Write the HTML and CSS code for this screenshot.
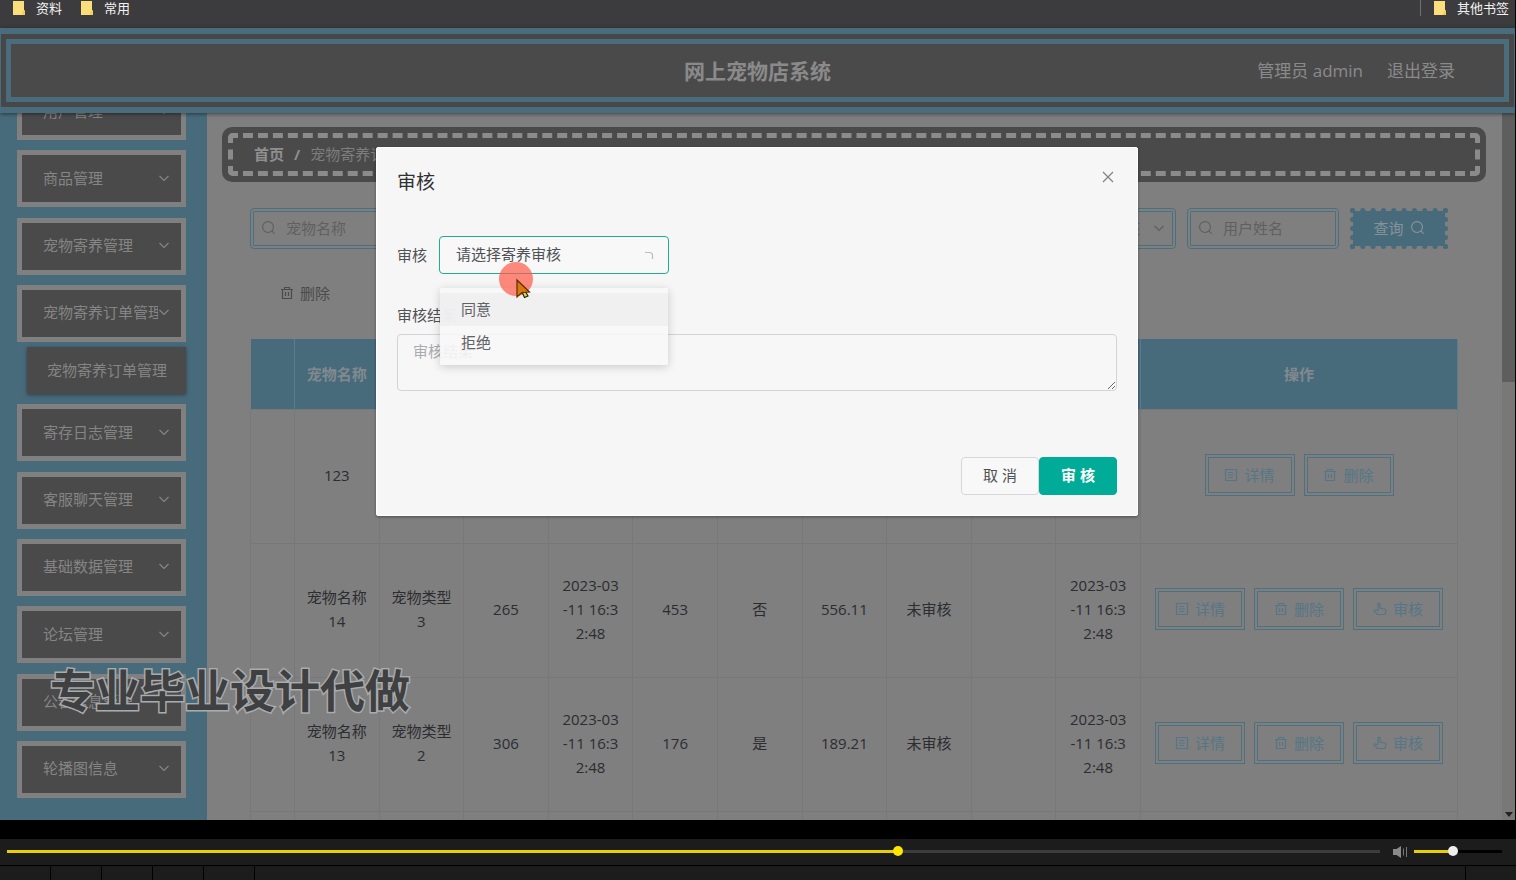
FILE: index.html
```html
<!DOCTYPE html>
<html lang="zh-CN">
<head>
  <meta charset="UTF-8" />
  <meta name="viewport" content="width=device-width, initial-scale=1.0"/>
  <title>网上宠物店系统</title>
  <link rel="stylesheet" href="styles.css">
</head>
<body>
  <!-- icons -->
  <svg class="sprite" aria-hidden="true">
    <symbol id="down" viewBox="0 0 12 12"><path d="M1.5 4L6 8.5 10.500 4"/></symbol>
    <symbol id="search" viewBox="0 0 16 16"><circle cx="7.500" cy="7.500" r="5.800"/><path d="M11.600 11.600L14.500 14.500"/></symbol>
    <symbol id="trash" viewBox="0 0 14 14"><path d="M1 3.500h12M4.500 3.500v-2h5v2M2.500 3.500v9h9v-9M5.500 6v4M8.500 6v4"/></symbol>
    <symbol id="doc" viewBox="0 0 14 14"><path d="M1.500 1.500h11v11h-11zM4 4.500h5M4 7h6M4 9.500h5"/></symbol>
    <symbol id="hand" viewBox="0 0 14 14"><path d="M5 9V2.200a1 1 0 0 1 2 0V6l5 1.200c.8.3 1 .8.900 1.500L12 12.500H4.500L1.200 9.200c-.6-.8.400-1.700 1.200-1.200L5 9"/></symbol>
    <symbol id="folder" viewBox="0 0 14 16"><path d="M1 1h11v9.500h1V15H1z" fill="#fbdf7c"/><path d="M10 15v-2.500l2-2h1V15z" fill="#f6cf55"/></symbol>
  </svg>

  <div class="screen">
    <nav class="bookmarks">
      <a href="#"><svg><use href="#folder"/></svg>资料</a>
      <a href="#"><svg><use href="#folder"/></svg>常用</a>
      <a href="#" class="other"><svg><use href="#folder"/></svg>其他书签</a>
    </nav>

    <header class="top">
      <div class="top-inner">
        <h1>网上宠物店系统</h1>
        <div class="user">
          <span>管理员 admin</span>
          <a href="#">退出登录</a>
        </div>
      </div>
    </header>

    <div class="page">
      <!-- side menu -->
      <aside class="sidebar">
        <ul class="menu">
          <li><a href="#" class="menu-item"><span>用户管理</span><svg><use href="#down"/></svg></a></li>
          <li><a href="#" class="menu-item"><span>商品管理</span><svg><use href="#down"/></svg></a></li>
          <li><a href="#" class="menu-item"><span>宠物寄养管理</span><svg><use href="#down"/></svg></a></li>
          <li>
            <a href="#" class="menu-item"><span>宠物寄养订单管理</span><svg><use href="#down"/></svg></a>
            <a href="#" class="sub-item">宠物寄养订单管理</a>
          </li>
          <li><a href="#" class="menu-item"><span>寄存日志管理</span><svg><use href="#down"/></svg></a></li>
          <li><a href="#" class="menu-item"><span>客服聊天管理</span><svg><use href="#down"/></svg></a></li>
          <li><a href="#" class="menu-item"><span>基础数据管理</span><svg><use href="#down"/></svg></a></li>
          <li><a href="#" class="menu-item"><span>论坛管理</span><svg><use href="#down"/></svg></a></li>
          <li><a href="#" class="menu-item"><span>公告信息管理</span><svg><use href="#down"/></svg></a></li>
          <li><a href="#" class="menu-item"><span>轮播图信息</span><svg><use href="#down"/></svg></a></li>
        </ul>
      </aside>

      <main class="main">
        <div class="crumb">
          <div class="crumb-inner"><a href="#">首页</a><b>/</b><span>宠物寄养订单管理</span></div>
        </div>

        <div class="content">
          <form class="search">
            <label class="field"><svg><use href="#search"/></svg><input type="text" placeholder="宠物名称" aria-label="宠物名称"></label>
            <label class="field field-select"><select aria-label="寄养审核"><option>请选择寄养审核</option></select><svg><use href="#down"/></svg></label>
            <label class="field"><svg><use href="#search"/></svg><input type="text" placeholder="用户姓名" aria-label="用户姓名"></label>
            <button type="button" class="btn-search">查询 <svg><use href="#search"/></svg></button>
          </form>

          <button type="button" class="btn-del"><svg><use href="#trash"/></svg>删除</button>

          <table class="list">
            <colgroup><col class="col-check"><col><col><col><col><col><col><col><col><col><col><col class="col-op"></colgroup>
            <thead>
              <tr><th></th><th>宠物名称</th><th></th><th></th><th></th><th></th><th></th><th></th><th></th><th></th><th></th><th>操作</th></tr>
            </thead>
            <tbody>
              <tr>
                <td></td><td>123</td><td></td><td></td><td></td><td></td><td></td><td></td><td></td><td></td><td></td>
                <td><div class="ops">
                  <button type="button"><svg><use href="#doc"/></svg>详情</button>
                  <button type="button"><svg><use href="#trash"/></svg>删除</button>
                </div></td>
              </tr>
              <tr>
                <td></td><td>宠物名称14</td><td>宠物类型3</td><td>265</td><td>2023-03<br>-11 16:3<br>2:48</td><td>453</td><td>否</td><td>556.11</td><td>未审核</td><td></td><td>2023-03<br>-11 16:3<br>2:48</td>
                <td><div class="ops">
                  <button type="button"><svg><use href="#doc"/></svg>详情</button>
                  <button type="button"><svg><use href="#trash"/></svg>删除</button>
                  <button type="button"><svg><use href="#hand"/></svg>审核</button>
                </div></td>
              </tr>
              <tr>
                <td></td><td>宠物名称13</td><td>宠物类型2</td><td>306</td><td>2023-03<br>-11 16:3<br>2:48</td><td>176</td><td>是</td><td>189.21</td><td>未审核</td><td></td><td>2023-03<br>-11 16:3<br>2:48</td>
                <td><div class="ops">
                  <button type="button"><svg><use href="#doc"/></svg>详情</button>
                  <button type="button"><svg><use href="#trash"/></svg>删除</button>
                  <button type="button"><svg><use href="#hand"/></svg>审核</button>
                </div></td>
              </tr>
              <tr><td></td><td></td><td></td><td></td><td></td><td></td><td></td><td></td><td></td><td></td><td></td><td></td></tr>
            </tbody>
          </table>
        </div>
      </main>

      <div class="scrollbar"><div class="thumb"></div><svg viewBox="0 0 8 5"><path d="M0 0h8L4 5z"/></svg></div>
    </div>

    <!-- review dialog -->
    <div class="mask">
      <div class="dialog" role="dialog" aria-labelledby="dialog-title">
        <div class="dialog-head">
          <h2 id="dialog-title">审核</h2>
          <button type="button" class="close" aria-label="关闭"><svg viewBox="0 0 12 12"><path d="M1 1l10 10M11 1L1 11"/></svg></button>
        </div>
        <form class="review">
          <div class="row">
            <label for="state">审核</label>
            <div class="pick">
              <select id="state"><option>请选择寄养审核</option></select>
              <svg viewBox="0 0 10 10"><path d="M1 1.500h4.500q3 0 3 3V8"/></svg>
              <ul class="options">
                <li class="on">同意</li>
                <li>拒绝</li>
              </ul>
              <svg class="pointer" viewBox="0 0 36 36">
                <circle cx="18" cy="18" r="17" fill="#ff5a48" fill-opacity=".7"/>
                <path d="M24 31l2.500 5.500 3.500-1.500-3-5" fill="#d8e020" stroke="#222"/>
                <path d="M19 19v17l5-4.500 7.500-.5z" fill="#d9780f" stroke="#5a2a00"/>
              </svg>
            </div>
          </div>
          <label for="result" class="block">审核结果</label>
          <textarea id="result" placeholder="审核结果"></textarea>
          <div class="buttons">
            <button type="button">取 消</button>
            <button type="button" class="primary">审 核</button>
          </div>
        </form>
      </div>
    </div>

    <div class="watermark">专业毕业设计代做</div>
  </div>

  <!-- video player -->
  <footer class="player">
    <input type="range" class="seek" min="0" max="100" value="65" aria-label="播放进度">
    <svg class="sound" viewBox="0 0 16 14"><path d="M1 4h3.500L9 1v12L4.500 10H1z" fill="#8a8a8a"/><path d="M11.500 3.500v7M14.500 2v10" stroke="#777" stroke-width="1"/></svg>
    <input type="range" class="volume" min="0" max="100" value="44" aria-label="音量">
  </footer>
  <div class="taskbar"><i></i><i></i><i></i><i></i><i></i><i class="last"></i></div>
</body>
</html>
```

FILE: styles.css
```css
* {
  box-sizing: border-box;
}

body {
  margin: 0;
  height: 100vh;
  display: flex;
  flex-direction: column;
  background: #000;
  font-family: "Open Sans", "Noto Sans CJK SC", sans-serif;
  font-size: 15px;
  line-height: 24px;
  color: #2b2d30;
}

a {
  color: inherit;
  text-decoration: none;
}

ul {
  list-style: none;
  margin: 0;
  padding: 0;
}

button, input, select, textarea {
  font: inherit;
  color: inherit;
}

svg {
  fill: none;
  stroke: currentColor;
  stroke-width: 1.2;
  flex: none;
}

.sprite {
  position: absolute;
  width: 0;
  height: 0;
}

.screen {
  flex: 1;
  min-height: 0;
  margin-right: 1px;
  display: flex;
  flex-direction: column;
  position: relative;
  overflow: hidden;
  background: #7f7f7f;
}

/* bookmarks */
.bookmarks {
  height: 28px;
  flex: none;
  display: flex;
  gap: 18px;
  padding: 0 6px 12px 12px;
  background: #3c3c3e;
  color: #f2f2f2;
  font-size: 13px;
  line-height: 16px;
}

.bookmarks a {
  display: flex;
  align-items: center;
  gap: 10px;
}

.bookmarks svg {
  width: 14px;
  height: 16px;
  stroke: none;
}

.bookmarks .other {
  margin-left: auto;
  padding-left: 12px;
  border-left: 1px solid #707072;
}

/* header */
.top {
  flex: none;
  z-index: 1;
  padding: 5px;
  background: #464848;
  border: solid #4a6c7c;
  border-width: 6px 1px;
  box-shadow: 0 1px 4px rgba(0, 0, 0, 0.5);
}

.top-inner {
  height: 63px;
  padding: 0 49px;
  display: flex;
  align-items: center;
  position: relative;
  background: #4a4a4a;
  border: 5px solid #4a6c7c;
  color: #8a8a8a;
}

.top h1 {
  flex: 1;
  margin: 0;
  text-align: center;
  font-size: 21px;
  line-height: 30px;
}

.user {
  position: absolute;
  right: 49px;
  display: flex;
  gap: 24px;
  font-size: 17px;
}

.page {
  flex: 1;
  min-height: 0;
  display: flex;
}

/* side menu */
.sidebar {
  flex: none;
  width: 207px;
  padding: 0 21px 22px 17px;
  background: #486b7c;
}

.menu {
  margin-top: -30px;
  height: calc(100% + 30px);
  display: flex;
  flex-direction: column;
  justify-content: space-between;
}

.menu-item {
  height: 57px;
  display: flex;
  align-items: center;
  justify-content: space-between;
  padding: 0 11px 2px 21px;
  background: #4a4a4a;
  border: 5px solid #808080;
  color: #858585;
}

.menu-item span {
  flex: 1;
  min-width: 0;
  overflow: hidden;
  white-space: nowrap;
}

.menu-item svg {
  width: 12px;
  height: 12px;
}

.sub-item {
  display: block;
  margin: 5px 0 0 10px;
  padding-left: 20px;
  line-height: 47px;
  white-space: nowrap;
  background: #4a4a4a;
  color: #858585;
  box-shadow: 0 1px 4px rgba(0, 0, 0, 0.4);
}

/* content */
.main {
  flex: 1;
  min-width: 0;
  padding: 14px 16px 0 15px;
}

.crumb {
  padding: 6px;
  background: #4a4a4a;
  border-radius: 10px;
}

.crumb-inner {
  height: 43px;
  display: flex;
  align-items: center;
  gap: 10px;
  padding: 0 21px 2px;
  border: 5px dashed #8a8b8a;
  border-radius: 5px;
  color: #7d7d7d;
}

.crumb a, .crumb b {
  font-weight: bold;
  color: #8f8f8f;
}

.content {
  padding: 26px 28px 0;
}

.search {
  display: flex;
  gap: 11px;
  margin-right: 10px;
}

.field {
  width: 152px;
  height: 41px;
  display: flex;
  align-items: center;
  gap: 10px;
  padding: 0 7px 2px;
  border: 4px double #48707f;
  border-radius: 4px;
  color: #5f5f5f;
}

.field svg {
  width: 15px;
  height: 15px;
}

.field input, .field select {
  width: 100%;
  min-width: 0;
  padding: 0;
  border: none;
  outline: none;
  appearance: none;
  background: none;
}

.field input::placeholder {
  color: #606060;
}

.field-select {
  margin-left: auto;
  gap: 0;
}

.field-select svg {
  width: 12px;
  height: 12px;
}

.btn-search {
  width: 98px;
  display: flex;
  align-items: center;
  justify-content: center;
  gap: 6px;
  padding: 0 0 2px;
  border: 5px dotted #486b7c;
  background: linear-gradient(#486b7c, #486b7c) center / calc(100% - 6px) calc(100% - 6px) no-repeat border-box;
  color: #87929a;
}

.btn-search svg {
  width: 15px;
  height: 15px;
}

.btn-del {
  display: flex;
  align-items: center;
  gap: 6px;
  margin: 32px 0 34px 30px;
  padding: 0;
  border: none;
  background: none;
  color: #4b4b4b;
}

.btn-del svg, .ops svg {
  width: 14px;
  height: 14px;
}

/* table */
.list {
  width: 100%;
  table-layout: fixed;
  border-collapse: collapse;
  text-align: center;
}

.col-check {
  width: 44px;
}

.col-op {
  width: 317px;
}

.list th {
  height: 70px;
  padding: 0;
  background: #486b7c;
  border-right: 1px solid #5b7d8d;
  color: #81898e;
}

.list td {
  height: 134px;
  padding: 0 10px 2px;
  border: 1px solid #777878;
}

.ops {
  display: flex;
  justify-content: center;
  gap: 9px;
  margin: 0 -10px;
}

.ops button {
  width: 90px;
  height: 42px;
  display: flex;
  align-items: center;
  justify-content: center;
  gap: 6px;
  padding: 0;
  border: 4px double #4f707e;
  background: none;
  color: #557686;
}

.scrollbar {
  width: 13px;
  flex: none;
  display: flex;
  flex-direction: column;
  align-items: center;
  justify-content: space-between;
  background: #7a7876;
}

.thumb {
  width: 100%;
  height: 38%;
  background: #5e5e5e;
}

.scrollbar svg {
  width: 8px;
  height: 5px;
  margin-bottom: 3px;
  fill: #222;
  stroke: none;
}

/* dialog */
.mask {
  position: absolute;
  inset: 0;
  z-index: 2;
  padding: 147px 1px 0 0;
}

.dialog {
  width: 762px;
  margin: 0 auto;
  padding: 20px;
  background: #f6f6f6;
  border: 1px solid #fff;
  border-radius: 2px;
  box-shadow: 0 1px 3px rgba(0, 0, 0, 0.4);
  color: #4f5154;
}

.dialog-head {
  display: flex;
  justify-content: space-between;
}

.dialog h2 {
  margin: 0;
  font-size: 19px;
  line-height: 28px;
  font-weight: normal;
  color: #303133;
}

.close {
  height: 18px;
  padding: 0 3px;
  border: none;
  background: none;
  line-height: 0;
  color: #808285;
}

.close svg {
  width: 12px;
  height: 12px;
}

.review {
  padding-top: 40px;
}

.row {
  display: flex;
  align-items: center;
  gap: 12px;
}

.pick {
  position: relative;
  width: 230px;
}

.pick select {
  display: block;
  width: 100%;
  height: 38px;
  padding: 0 16px 2px;
  appearance: none;
  outline: none;
  background: #f7f8f7;
  border: 1px solid #22aa94;
  border-radius: 4px;
}

.pick > svg {
  position: absolute;
  right: 15px;
  top: 15px;
  width: 10px;
  height: 10px;
  color: #b9bcc0;
}

.options {
  position: absolute;
  top: 52px;
  left: 1px;
  right: 1px;
  padding: 5px 0 6px;
  background: rgba(248, 248, 248, 0.88);
  border-radius: 2px;
  box-shadow: 0 2px 10px rgba(0, 0, 0, 0.18);
  color: #606266;
}

.options li {
  padding: 0 21px;
  line-height: 33px;
}

.options .on {
  background: rgba(238, 238, 238, 0.8);
}

.pick > .pointer {
  left: 59px;
  top: 25px;
  width: 36px;
  height: 36px;
  overflow: visible;
  stroke: none;
}

.block {
  display: block;
  margin: 29px 0 7px;
}

.review textarea {
  display: block;
  width: 100%;
  height: 57px;
  padding: 4px 15px;
  background: #f7f7f7;
  border: 1px solid #d3d4d6;
  border-radius: 4px;
}

.review textarea::placeholder {
  color: #a9abae;
}

.buttons {
  display: flex;
  justify-content: flex-end;
  margin-top: 66px;
}

.buttons button {
  width: 78px;
  height: 38px;
  padding: 0 0 2px;
  border: 1px solid #d6d7d9;
  border-radius: 4px;
  background: #f8f8f8;
}

.buttons .primary {
  border-color: #00ac97;
  background: #00ac97;
  color: #fff;
  font-weight: bold;
}

.watermark {
  position: absolute;
  left: 50px;
  bottom: 99px;
  z-index: 3;
  font-size: 45px;
  line-height: 60px;
  font-weight: bold;
  color: #3f4041;
  -webkit-text-stroke: 3px #a9abac;
  paint-order: stroke fill;
}

/* player */
.player {
  height: 27px;
  flex: none;
  display: flex;
  align-items: center;
  margin-top: 19px;
  padding: 0 14px 1px 7px;
  background: #1c1c1c;
  border-bottom: 1px solid #000;
}

.player input {
  height: 12px;
  margin: 0;
  appearance: none;
  background: none;
}

.seek {
  flex: 1;
}

.player ::-webkit-slider-runnable-track {
  height: 3px;
}

.seek::-webkit-slider-runnable-track {
  background: linear-gradient(to right, #e8d000 65%, #3c3c3c 65%);
}

.volume {
  width: 88px;
}

.volume::-webkit-slider-runnable-track {
  background: linear-gradient(to right, #e8d000 44%, #000 44%);
}

.player ::-webkit-slider-thumb {
  appearance: none;
  width: 10px;
  height: 10px;
  margin-top: -4px;
  border-radius: 50%;
  background: #ffe600;
}

.volume::-webkit-slider-thumb {
  background: #eee;
}

.sound {
  width: 16px;
  height: 14px;
  margin: 0 6px 0 12px;
  stroke: none;
}

.taskbar {
  height: 14px;
  flex: none;
  display: flex;
  background: #1c1c1c;
}

.taskbar i {
  width: 51px;
  border-right: 1px solid #000;
}

.taskbar .last {
  margin-left: auto;
  border-right: none;
  border-left: 1px solid #000;
}
```
